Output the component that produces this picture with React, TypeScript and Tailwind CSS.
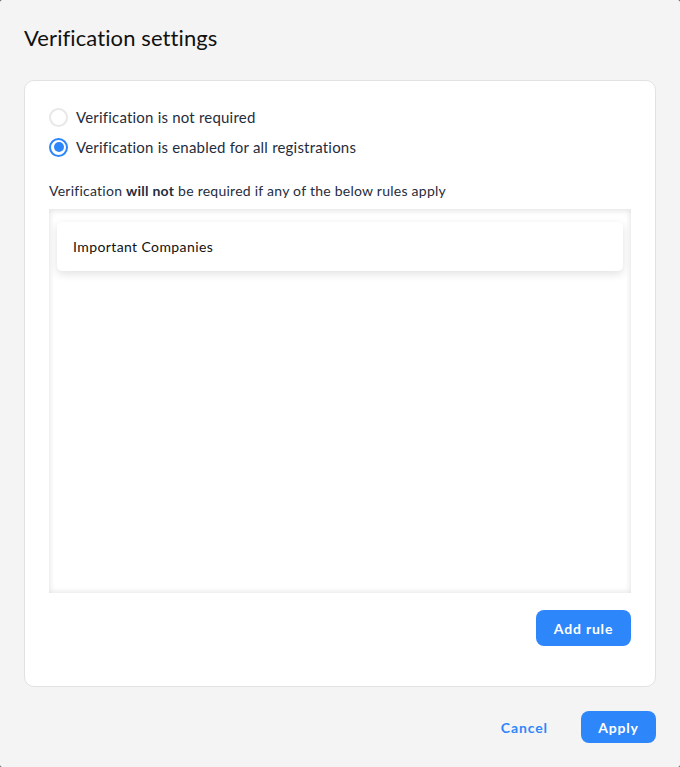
import React from "react";

export default function App() {
  const font = { fontFamily: "Lato, 'Open Sans', sans-serif" };
  return (
    <div className="w-[680px] h-[767px] bg-[#2c3e50]">
      <div
        className="w-[680px] h-[767px] bg-[#f4f4f4] rounded-[2px] flex flex-col px-6"
        style={font}
      >
        <h1 className="text-[22px] text-[#111] leading-none pt-[27px] h-[80px] tracking-[0.1px]">
          Verification settings
        </h1>
        <div className="h-[607px] bg-white border border-[#e2e2e2] rounded-[10px] flex flex-col px-6 pt-[27px]">
          <div className="flex flex-col gap-[12px]">
            <label className="flex items-center gap-[8px] h-[18px]">
              <span className="w-[19px] h-[19px] rounded-full border-2 border-[#e8e8e8] bg-white" />
              <span className="text-[15px] tracking-[0.2px] text-[#1f2d3d]">Verification is not required</span>
            </label>
            <label className="flex items-center gap-[8px] h-[18px]">
              <span className="w-[19px] h-[19px] rounded-full border-2 border-[#2d87fb] bg-white flex items-center justify-center">
                <span className="w-[10px] h-[10px] rounded-full bg-[#2d87fb]" />
              </span>
              <span className="text-[15px] tracking-[0.2px] text-[#1f2d3d]">
                Verification is enabled for all registrations
              </span>
            </label>
          </div>
          <p className="text-[14px] tracking-[0.25px] text-[#1f2d3d] mt-[26px] leading-[17px]">
            Verification <b className="font-bold">will not</b> be required if any of the below rules apply
          </p>
          <div className="mt-[10px] h-[384px] bg-white shadow-[inset_0_0_6px_rgba(0,0,0,0.14)] border-t border-[#ececec] px-2 pt-3">
            <div className="h-[49px] bg-white rounded-[5px] shadow-[0_3px_8px_rgba(0,0,0,0.12)] flex items-center px-[16px] text-[14px] tracking-[0.4px] text-[#111]">
              Important Companies
            </div>
          </div>
          <div className="flex justify-end mt-[17px]">
            <button className="h-[36px] w-[95px] rounded-[8px] bg-[#2d87fb] text-white text-[14px] font-bold tracking-[0.8px]">
              Add rule
            </button>
          </div>
        </div>
        <div className="flex justify-end items-center gap-[33px] mt-[24px]">
          <button className="text-[#2d87fb] text-[14px] font-bold tracking-[0.9px]">Cancel</button>
          <button className="h-[32px] w-[75px] rounded-[8px] bg-[#2d87fb] text-white text-[14px] font-bold tracking-[0.8px]">
            Apply
          </button>
        </div>
      </div>
    </div>
  );
}
